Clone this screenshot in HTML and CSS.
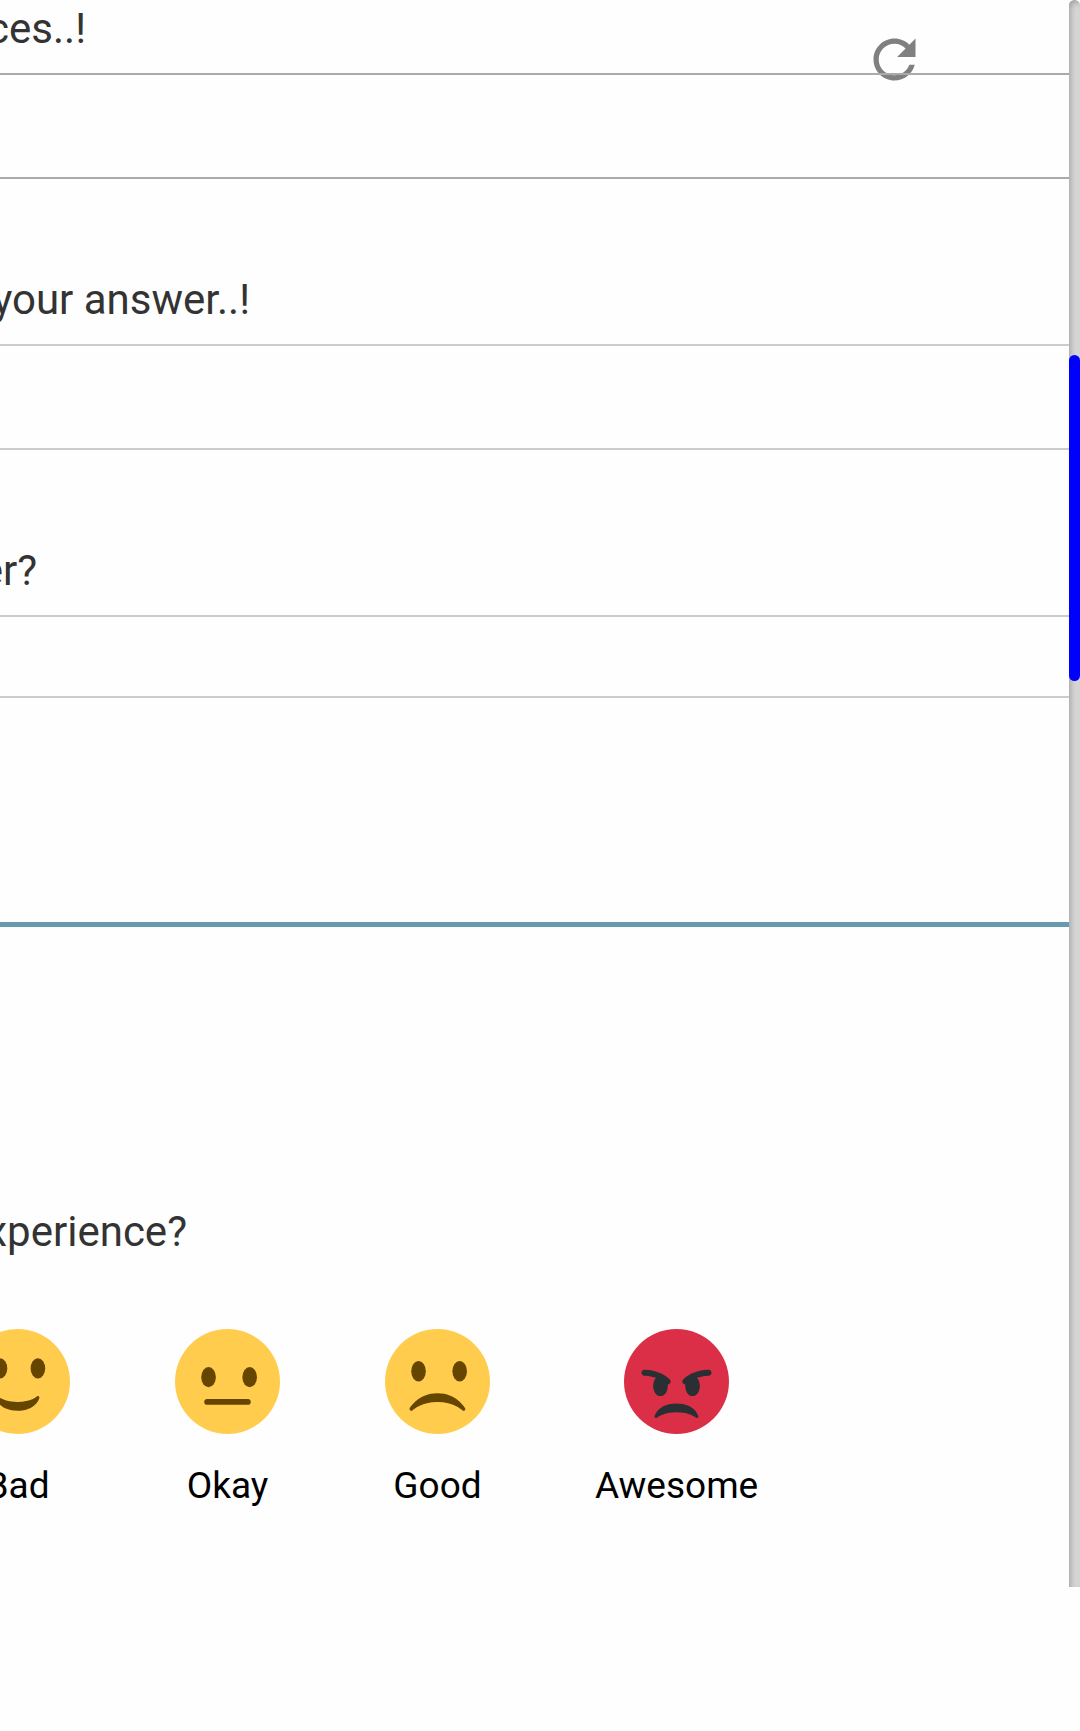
FILE: index.html
```
<!DOCTYPE html>
<html lang="en">
<head>
<meta charset="utf-8">
<meta name="viewport" content="width=device-width, initial-scale=1">
<title>Feedback</title>
<link rel="stylesheet" href="styles.css">
</head>
<body>
<div class="page">
  <main class="form">
    <section class="questions">
      <div class="field">
        <label class="question question-choices" for="choices">ces..!</label>
        <input class="answer answer-dark" id="choices" type="text">
      </div>
      <div class="field">
        <label class="question question-answer" for="answer">your answer..!</label>
        <input class="answer" id="answer" type="text">
      </div>
      <div class="field">
        <label class="question question-other" for="other">er?</label>
        <input class="answer answer-short" id="other" type="text">
      </div>
      <button class="refresh" type="button" aria-label="Refresh">
        <svg viewBox="0 0 24 24"><path fill="#808080" d="M17.65 6.35C16.2 4.9 14.21 4 12 4c-4.42 0-7.99 3.58-7.99 8s3.57 8 7.99 8c3.73 0 6.84-2.55 7.73-6h-2.08c-.82 2.33-3.04 4-5.65 4-3.31 0-6-2.69-6-6s2.69-6 6-6c1.66 0 3.14.69 4.22 1.78L13 11h7V4l-2.35 2.35z"/></svg>
      </button>
    </section>
    <section class="experience">
      <h2 class="question question-experience">xperience?</h2>
      <div class="ratings">
        <button class="rating" type="button">
          <svg class="face" viewBox="0 0 36 36"><circle fill="#FFCC4D" cx="18" cy="18" r="18"/><path fill="#664500" d="M10.515 23.621C10.56 23.8 11.683 28 18 28c6.318 0 7.44-4.2 7.485-4.379.055-.217-.043-.442-.237-.554-.195-.111-.439-.078-.6.077C24.629 23.163 22.694 25 18 25s-6.63-1.837-6.648-1.855C11.256 23.05 11.128 23 11 23c-.084 0-.169.021-.246.064-.196.112-.294.339-.239.557z"/><ellipse fill="#664500" cx="12" cy="13.5" rx="2.5" ry="3.5"/><ellipse fill="#664500" cx="25" cy="13.5" rx="2.5" ry="3.5"/></svg>
          <span>Bad</span>
        </button>
        <button class="rating" type="button">
          <svg class="face" viewBox="0 0 36 36"><circle fill="#FFCC4D" cx="18" cy="18" r="18"/><ellipse fill="#664500" cx="11.5" cy="16.5" rx="2.5" ry="3.5"/><ellipse fill="#664500" cx="25.6" cy="16.5" rx="2.5" ry="3.5"/><path fill="#664500" d="M25 26H11c-.552 0-1-.447-1-1s.448-1 1-1h14c.553 0 1 .447 1 1s-.447 1-1 1z"/></svg>
          <span>Okay</span>
        </button>
        <button class="rating" type="button">
          <svg class="face" viewBox="0 0 36 36"><circle fill="#FFCC4D" cx="18" cy="18" r="18"/><ellipse fill="#664500" cx="11.5" cy="14.5" rx="2.5" ry="3.5"/><ellipse fill="#664500" cx="25.6" cy="14.5" rx="2.5" ry="3.5"/><path fill="#664500" d="M8.7 27.9c-.3-.2-.4-.5-.2-.8C8.6 26.900 11.500 22 18 22s9.300 4.900 9.450 5.100c.18.300.1.600-.15.800-.25.190-.56.130-.78-.08C26.470 27.800 23.500 25 18 25c-5.500 0-8.470 2.800-8.520 2.830-.22.210-.54.250-.78.070z"/></svg>
          <span>Good</span>
        </button>
        <button class="rating" type="button">
          <svg class="face" viewBox="0 0 36 36"><circle fill="#DA2F47" cx="18" cy="18" r="18"/><path fill="#292F33" d="M25.485 29.879C25.440 29.700 24.317 25.500 18 25.500c-6.318 0-7.440 4.200-7.485 4.379-.055.217.043.442.237.554.195.109.439.079.600-.077.019-.019 1.954-1.856 6.648-1.856s6.630 1.837 6.648 1.855c.096.095.224.145.352.145.084 0 .169-.021.246-.064.196-.112.294-.339.239-.557zm-9.778-12.586C12.452 14.038 7.221 14 7 14c-.552 0-.999.447-.999.998-.001.552.446 1 .998 1.002.029 0 1.925.022 3.983.737-.593.640-.982 1.634-.982 2.763 0 1.934 1.119 3.500 2.500 3.500s2.500-1.566 2.500-3.500c0-.174-.019-.340-.037-.507.013 0 .025.007.037.007.256 0 .512-.098.707-.293.391-.391.391-1.023 0-1.414zM29 14c-.221 0-5.451.038-8.707 3.293-.391.391-.391 1.023 0 1.414.195.195.451.293.707.293.013 0 .024-.007.036-.007-.016.167-.036.333-.036.507 0 1.934 1.119 3.500 2.500 3.500s2.500-1.566 2.500-3.500c0-1.129-.389-2.123-.982-2.763 2.058-.715 3.954-.737 3.984-.737.551-.002.998-.450.997-1.002-.001-.551-.447-.998-.999-.998z"/></svg>
          <span>Awesome</span>
        </button>
      </div>
    </section>
  </main>
  <div class="track">
    <div class="thumb"></div>
  </div>
</div>
</body>
</html>
```
FILE: styles.css
```
* {
  box-sizing: border-box;
}

body {
  margin: 0;
  background: #fefefe;
  color: #333;
  font-family: Roboto, "Liberation Sans", sans-serif;
  overflow-x: hidden;
}

.page {
  display: flex;
}

.form {
  flex: 1;
  min-width: 0;
}

.questions {
  position: relative;
  z-index: 0;
  display: flex;
  flex-direction: column;
  gap: 96px;
  padding: 4px 0 224px;
  border-bottom: 5px solid #669aaf;
}

.field {
  display: flex;
  flex-direction: column;
  gap: 20px;
}

/* The start of each question runs out past the left edge. */
.question {
  display: flex;
  justify-content: flex-end;
  margin: 0;
  font-size: 42px;
  font-weight: 400;
  line-height: 49px;
  white-space: nowrap;
}

.question-choices {
  width: 86px;
}

.question-answer {
  width: 250px;
}

.question-other {
  width: 37px;
}

.question-experience {
  width: 187px;
}

.answer {
  width: 100%;
  height: 106px;
  padding: 0 24px;
  border: solid #ccc;
  border-width: 2px 0;
  background: transparent;
  color: inherit;
  font: inherit;
  font-size: 37px;
}

.answer-dark {
  border-color: #aaa;
}

.answer-short {
  height: 83px;
}

.refresh {
  position: absolute;
  z-index: -1;
  top: 28px;
  right: 143px;
  width: 63px;
  height: 63px;
  padding: 0;
  border: 0;
  background: none;
}

.refresh svg {
  display: block;
}

.experience {
  display: flex;
  flex-direction: column;
  gap: 73px;
  padding: 280px 0 80px;
}

.ratings {
  display: flex;
  gap: 105px;
  margin-left: -35px;
}

.rating {
  display: flex;
  flex-direction: column;
  align-items: center;
  gap: 30px;
  min-width: 105px;
  padding: 0;
  border: 0;
  background: none;
  color: #000;
  font: inherit;
  font-size: 37px;
  line-height: 43px;
}

.face {
  width: 105px;
  height: 105px;
}

.track {
  width: 11px;
  padding-top: 355px;
  border-radius: 6px 6px 0 0;
  background: #d6d6d6;
  box-shadow: inset 3px 3px 6px -2px #9a9a9a;
}

.thumb {
  height: 326px;
  border-radius: 6px;
  background: #00f;
}
```
